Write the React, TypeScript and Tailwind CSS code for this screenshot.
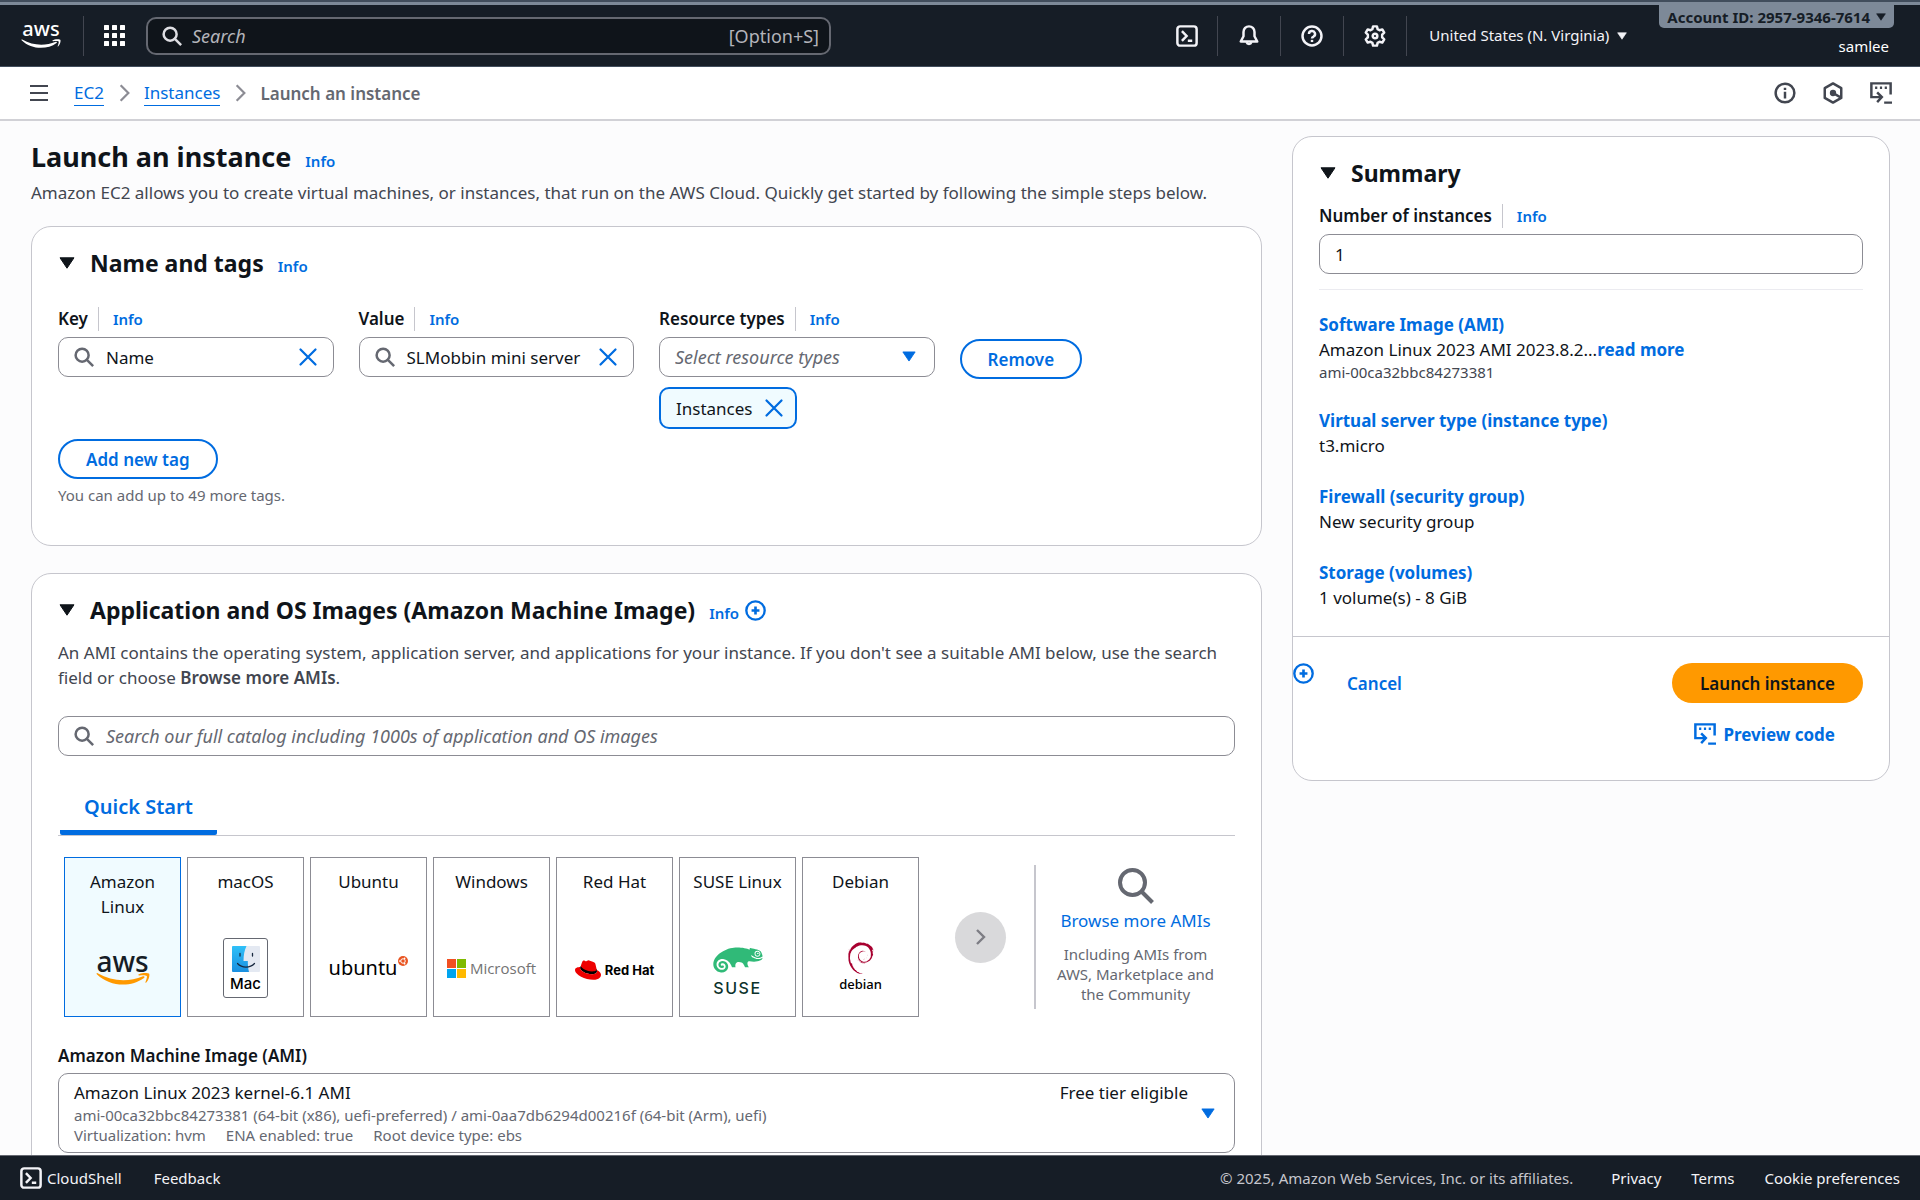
import React from 'react'
import { FaRedhat, FaSuse } from 'react-icons/fa'
import { SiDebian } from 'react-icons/si'

type IconProps = { className?: string }

const SearchIcon = ({ className = 'size-5' }: IconProps) => (
  <svg viewBox="0 0 16 16" className={`shrink-0 ${className}`} fill="none" stroke="currentColor" strokeWidth="2">
    <circle cx="6.5" cy="6.5" r="5.2" />
    <path d="m10.3 10.3 5 5" />
  </svg>
)

const CloseIcon = () => (
  <svg viewBox="0 0 16 16" className="size-5 shrink-0 text-[#006ce0]" fill="none" stroke="currentColor" strokeWidth="1.8" strokeLinecap="round">
    <path d="m2 2 12 12M14 2 2 14" />
  </svg>
)

const Caret = ({ className = '' }: IconProps) => (
  <svg viewBox="0 0 16 12" className={`shrink-0 ${className}`} fill="currentColor" stroke="currentColor" strokeLinejoin="round">
    <path d="M1 .8h14L8 11.2z" />
  </svg>
)

const ShellIcon = () => (
  <svg viewBox="0 0 16 16" className="size-[22px] shrink-0" fill="none" stroke="currentColor" strokeWidth="1.8">
    <rect x="1" y="1" width="14" height="14" rx="2" />
    <path d="m4.3 4.5 3.4 3.5-3.4 3.5M8.6 11.5h3.2" />
  </svg>
)

const BellIcon = () => (
  <svg viewBox="0 0 16 16" className="size-[22px]" fill="none" stroke="currentColor" strokeWidth="1.8" strokeLinejoin="round">
    <path d="M8 1a4 4 0 0 0-4 4v3.2L2 12h12l-2-3.8V5a4 4 0 0 0-4-4z" />
    <path d="M6.2 12.5a1.9 1.9 0 0 0 3.6 0" />
  </svg>
)

const HelpIcon = () => (
  <svg viewBox="0 0 16 16" className="size-[22px]" fill="none" stroke="currentColor" strokeWidth="1.8">
    <circle cx="8" cy="8" r="6.9" />
    <path d="M5.8 6.5a2.2 2.2 0 1 1 3.3 1.9c-.8.4-1.1.7-1.1 1.4" />
    <path d="M8 10.8v1.6" />
  </svg>
)

const GearIcon = () => (
  <svg viewBox="0 0 16 16" className="size-[22px]" fill="none" stroke="currentColor" strokeWidth="1.8" strokeLinejoin="round">
    <path d="M6.6 1h2.8l.5 2 1.4.8 2-.6 1.4 2.4L13.2 7v2l1.5 1.4-1.4 2.4-2-.6-1.4.8-.5 2H6.6l-.5-2-1.4-.8-2 .6-1.4-2.4L2.8 9V7L1.3 5.6l1.4-2.4 2 .6L6.1 3z" />
    <circle cx="8" cy="8" r="1.7" />
  </svg>
)

const InfoIcon = () => (
  <svg viewBox="0 0 16 16" className="size-[22px]" fill="none" stroke="currentColor" strokeWidth="1.8">
    <circle cx="8" cy="8" r="6.8" />
    <path d="M8 7v5M8 4.2v1.7" />
  </svg>
)

const HexIcon = () => (
  <svg viewBox="0 0 16 16" className="size-[22px]" fill="none" stroke="currentColor" strokeWidth="1.8" strokeLinejoin="round">
    <path d="M8 1 14 4.4v7.2L8 15l-6-3.4V4.4z" />
    <path d="m8 8 5.5 3.2" />
    <circle cx="8" cy="8" r="1.4" fill="currentColor" />
  </svg>
)

const PreviewIcon = () => (
  <svg viewBox="0 0 16 16" className="size-[22px] shrink-0" fill="none" stroke="currentColor" strokeWidth="1.8">
    <path d="M15 9V1H1v10h6.5M5.2 7.6 8.6 11l-3.4 3.6M10.3 15H16" />
    <path d="M3.7 4.2h1.6M7.2 4.2h1.6M10.7 4.2h1.6" />
  </svg>
)

const PlusCircle = () => (
  <svg viewBox="0 0 16 16" className="size-[21px]" fill="none" stroke="currentColor" strokeWidth="1.8">
    <circle cx="8" cy="8" r="7" />
    <path d="M8 5v6M5 8h6" strokeWidth="2" />
  </svg>
)

const Smile = ({ className = '' }: IconProps) => (
  <svg viewBox="0 0 54 14" className={className} fill="currentColor">
    <path d="M.8 1.2C.2.4.8-.2 1.6.3 16 8.5 32 9.5 47 3.3c1.2-.5 2.2.8 1 1.6C35 14.5 14 14 .8 1.2z" />
    <path d="M42.5 1.6C45-.2 50-.5 53 .5c1 .8.2 6.5-2.7 9-.6.5-1.1.2-.8-.5.7-1.9 1.8-4.8 1.3-5.9-.7-1-4.5-.9-7.3-.6-1 .1-1.6-.4-1-.9z" />
  </svg>
)

const InfoLink = () => (
  <a href="#" className="text-[15px] leading-5 font-semibold text-[#006ce0]">
    Info
  </a>
)

const CardHeading = ({ title, children }: { title: string; children?: React.ReactNode }) => (
  <div className="flex items-center gap-[15px]">
    <Caret className="ml-px w-4 h-3" />
    <div className="flex items-baseline gap-[14px]">
      <h2 className="text-[23px] leading-8 font-bold">{title}</h2>
      {children}
    </div>
  </div>
)

const FieldLabel = ({ id, text }: { id: string; text: string }) => (
  <div className="flex items-center mb-[6px] leading-[25px]">
    <label htmlFor={id} className="font-semibold">
      {text}
    </label>
    <span className="ml-[10px] mr-[14px] h-6 w-px bg-[#c6c6cd]" />
    <InfoLink />
  </div>
)

const SearchField = ({ id, value }: { id: string; value: string }) => (
  <div className="flex items-center h-10 gap-3 px-[15px] border border-[#8c8c94] rounded-[10px] bg-white">
    <SearchIcon className="size-5 text-[#656871]" />
    <input id={id} defaultValue={value} className="flex-1 min-w-0 outline-none" />
    <button aria-label="Clear">
      <CloseIcon />
    </button>
  </div>
)

const AwsLogo = () => (
  <div className="flex flex-col items-center">
    <span className="text-[28px] leading-6 font-medium text-[#161d26]">aws</span>
    <Smile className="w-[54px] h-[14px] text-[#ff9900]" />
  </div>
)

const MacLogo = () => (
  <div className="flex flex-col items-center w-[45px] h-[60px] pt-[7px] border border-[#656871] rounded-[3px] bg-white">
    <svg viewBox="0 0 28 26" className="w-7 h-[26px]">
      <defs>
        <linearGradient id="finder" x1="0" y1="0" x2="0" y2="1">
          <stop offset="0" stopColor="#2fc0f8" />
          <stop offset="1" stopColor="#1a8fe0" />
        </linearGradient>
      </defs>
      <rect width="28" height="26" rx="1" fill="#e4e9f2" />
      <path d="M0 1a1 1 0 0 1 1-1h13.5C12.5 4 11.5 9 11.5 15h4.3c0 4 .4 8 1.2 11H1a1 1 0 0 1-1-1z" fill="url(#finder)" />
      <path d="M8 7.5v2.5M20.5 7.5v2.5" stroke="#17283f" strokeWidth="1.3" strokeLinecap="round" />
      <path d="M5.5 17.5c4.5 4.8 12.5 4.8 17 0" stroke="#17283f" strokeWidth="1.2" fill="none" strokeLinecap="round" />
    </svg>
    <span className="font-[Inter] text-[15px] leading-6 font-medium text-black">Mac</span>
  </div>
)

const UbuntuLogo = () => (
  <div className="flex items-start gap-px">
    <span className="text-xl leading-7 text-black">ubuntu</span>
    <svg viewBox="0 0 20 20" className="size-[10px] mt-[2px]">
      <circle cx="10" cy="10" r="10" fill="#e95420" />
      <circle cx="10" cy="10" r="4.5" fill="none" stroke="#fff" strokeWidth="2" />
      <circle cx="3.8" cy="10" r="1.7" fill="#fff" />
      <circle cx="13.2" cy="4.6" r="1.7" fill="#fff" />
      <circle cx="13.2" cy="15.4" r="1.7" fill="#fff" />
    </svg>
  </div>
)

const MicrosoftLogo = () => (
  <div className="flex items-center gap-1">
    <svg viewBox="0 0 19 19" className="size-[19px]">
      <path d="M0 0h9v9H0z" fill="#f25022" />
      <path d="M10 0h9v9h-9z" fill="#7fba00" />
      <path d="M0 10h9v9H0z" fill="#00a4ef" />
      <path d="M10 10h9v9h-9z" fill="#ffb900" />
    </svg>
    <span className="font-['Open_Sans'] text-[15px] leading-5 font-medium text-[#737373]">Microsoft</span>
  </div>
)

const RedHatLogo = () => (
  <div className="flex items-center gap-1 pt-1">
    <span className="relative">
      {/* black hat band, seen through the gap of the icon */}
      <svg viewBox="0 0 512 512" className="absolute inset-0 size-[26px]">
        <path d="M104 199a49 49 0 0 0-4 19c0 49 110 123 236 122 56 0 98-21 98-58 0-3 0-5-5-27l-5-17L113 179z" />
      </svg>
      <FaRedhat className="relative size-[26px] text-[#ee0000]" />
    </span>
    <span className="font-[Inter] text-[13px] leading-5 font-bold text-black">Red Hat</span>
  </div>
)

const SuseLogo = () => (
  <div className="flex flex-col items-center">
    <FaSuse className="h-10 w-[50px] text-[#30ba78]" />
    <span className="font-[Inter] text-base leading-4 font-medium tracking-widest text-[#0c322c]">SUSE</span>
  </div>
)

const DebianLogo = () => (
  <div className="flex flex-col items-center">
    <SiDebian className="size-8 text-[#a80030]" />
    <span className="text-[13px] leading-5 font-medium text-black">debian</span>
  </div>
)

const systems = [
  { name: 'Amazon Linux', logo: <AwsLogo /> },
  { name: 'macOS', logo: <MacLogo /> },
  { name: 'Ubuntu', logo: <UbuntuLogo /> },
  { name: 'Windows', logo: <MicrosoftLogo /> },
  { name: 'Red Hat', logo: <RedHatLogo /> },
  { name: 'SUSE Linux', logo: <SuseLogo /> },
  { name: 'Debian', logo: <DebianLogo /> },
]

const Header = () => (
  <header className="bg-[#161d26] text-white">
    <div className="h-[5px] border-t-2 border-[#414d5c] bg-[#7d8998]" />
    <div className="flex items-center h-[62px] border-b border-[#414d5c]">
      <a href="#" aria-label="AWS home" className="flex flex-col items-center w-10 ml-[21px]">
        <span className="text-xl leading-4 font-medium">aws</span>
        <Smile className="w-10 h-[11px] mt-[2px]" />
      </a>
      <span className="h-10 w-px ml-[22px] bg-[#424650]" />
      <button aria-label="Services" className="ml-5">
        <svg viewBox="0 0 21 21" className="size-[21px]" fill="currentColor">
          {[0, 8, 16].map((y) =>
            [0, 8, 16].map((x) => <rect key={`${x}-${y}`} x={x} y={y} width="5" height="5" rx=".5" />)
          )}
        </svg>
      </button>
      <div className="flex items-center w-[685px] h-[38px] ml-[21px] px-[14px] gap-[10px] border-2 border-[#656871] rounded-[10px] bg-[#0f141a]">
        <SearchIcon className="size-5 text-[#dedee3]" />
        <input aria-label="Search" placeholder="Search" className="flex-1 min-w-0 text-lg outline-none placeholder:italic placeholder:text-[#b4b4bb]" />
        <span className="-mr-1 text-lg text-[#b4b4bb]">[Option+S]</span>
      </div>
      <nav className="flex items-center h-10 ml-auto text-[#f3f3f7]">
        <button aria-label="CloudShell" className="flex items-center justify-center w-[62px] h-10 border-r border-[#424650]">
          <ShellIcon />
        </button>
        <button aria-label="Notifications" className="flex items-center justify-center w-[63px] h-10 border-r border-[#424650]">
          <BellIcon />
        </button>
        <button aria-label="Help" className="flex items-center justify-center w-[63px] h-10 border-r border-[#424650]">
          <HelpIcon />
        </button>
        <button aria-label="Settings" className="flex items-center justify-center w-[63px] h-10 border-r border-[#424650]">
          <GearIcon />
        </button>
        <button className="flex items-center gap-2 ml-[22px] text-[15px]">
          United States (N. Virginia)
          <Caret className="w-[10px] h-2" />
        </button>
      </nav>
      <div className="flex flex-col items-end self-start ml-8 mr-[26px]">
        <button className="flex items-center gap-[6px] h-[23px] px-2 rounded-b-[5px] bg-[#7d8998] text-[15px] leading-6 font-bold text-[#161d26]">
          Account ID: 2957-9346-7614
          <Caret className="w-[10px] h-2" />
        </button>
        <span className="mt-[7px] mr-[5px] text-[15px] leading-[22px]">samlee</span>
      </div>
    </div>
  </header>
)

const Separator = () => (
  <svg viewBox="0 0 10 16" className="w-[11px] h-[18px] ml-[15px] mr-[14px]" fill="none" stroke="#8c8c94" strokeWidth="2">
    <path d="m1.5 1 7 7-7 7" />
  </svg>
)

const Breadcrumbs = () => (
  <div className="flex items-center h-[54px] pl-[30px] pr-7 border-b-2 border-[#d1d1d6] bg-white text-[#424650]">
    <button aria-label="Open menu" className="flex flex-col gap-[5px] w-[18px] mr-[26px]">
      <span className="w-full h-[2px] bg-[#424650]" />
      <span className="w-full h-[2px] bg-[#424650]" />
      <span className="w-full h-[2px] bg-[#424650]" />
    </button>
    <a href="#" className="leading-6 border-b border-[#006ce0] text-[#006ce0]">EC2</a>
    <Separator />
    <a href="#" className="leading-6 border-b border-[#006ce0] text-[#006ce0]">Instances</a>
    <Separator />
    <span className="font-semibold text-[#656871]">Launch an instance</span>
    <div className="flex gap-[26px] ml-auto">
      <button aria-label="Info"><InfoIcon /></button>
      <button aria-label="Amazon Q"><HexIcon /></button>
      <button aria-label="Preview code"><PreviewIcon /></button>
    </div>
  </div>
)

const NameAndTags = () => (
  <section className="mt-[21px] px-[26px] pt-5 pb-10 border border-[#c6c6cd] rounded-[20px] bg-white">
    <CardHeading title="Name and tags">
      <InfoLink />
    </CardHeading>
    <div className="grid grid-cols-4 gap-x-[25px] mt-[27px]">
      <div>
        <FieldLabel id="tag-key" text="Key" />
        <SearchField id="tag-key" value="Name" />
      </div>
      <div>
        <FieldLabel id="tag-value" text="Value" />
        <SearchField id="tag-value" value="SLMobbin mini server" />
      </div>
      <div>
        <FieldLabel id="tag-types" text="Resource types" />
        <div className="relative">
          <select id="tag-types" className="w-full h-10 px-[15px] border border-[#8c8c94] rounded-[10px] bg-white appearance-none text-lg italic text-[#656871]">
            <option>Select resource types</option>
          </select>
          <Caret className="absolute right-[19px] top-[14px] w-[14px] h-[11px] text-[#006ce0] pointer-events-none" />
        </div>
        <span className="inline-flex items-center h-[42px] gap-3 mt-[10px] px-[15px] border-2 border-[#006ce0] rounded-[10px] bg-[#f0fbff]">
          Instances
          <button aria-label="Remove Instances" className="-mr-1">
            <CloseIcon />
          </button>
        </span>
      </div>
      <div className="pt-[33px]">
        <button className="h-10 px-[26px] border-2 border-[#006ce0] rounded-full font-semibold text-[#006ce0]">Remove</button>
      </div>
    </div>
    <button className="h-10 mt-[10px] px-[26px] border-2 border-[#006ce0] rounded-full font-semibold text-[#006ce0]">Add new tag</button>
    <p className="mt-[6px] text-[15px] leading-5 text-[#656871]">You can add up to 49 more tags.</p>
  </section>
)

const Images = () => (
  <section className="mt-[27px] px-[26px] pt-5 pb-10 border border-[#c6c6cd] rounded-[20px] bg-white">
    <div className="flex items-center gap-[6px]">
      <CardHeading title="Application and OS Images (Amazon Machine Image)">
        <InfoLink />
      </CardHeading>
      <button aria-label="Add" className="text-[#006ce0]">
        <PlusCircle />
      </button>
    </div>
    <p className="mt-[14px] text-[#424650]">
      An AMI contains the operating system, application server, and applications for your instance. If you don't see a suitable AMI below, use the search field or choose <b className="font-semibold">Browse more AMIs</b>.
    </p>
    <div className="flex items-center h-10 gap-3 mt-[26px] px-[15px] border border-[#8c8c94] rounded-[10px]">
      <SearchIcon className="size-5 text-[#656871]" />
      <input
        aria-label="Search images"
        placeholder="Search our full catalog including 1000s of application and OS images"
        className="flex-1 text-lg outline-none placeholder:italic placeholder:text-[#656871]"
      />
    </div>
    <div className="mt-[38px] border-b border-[#c6c6cd]" role="tablist">
      <button role="tab" className="ml-[2px] px-6 pb-[10px] border-b-[5px] border-[#006ce0] rounded-b-[2px] text-xl leading-[26px] font-semibold text-[#006ce0]">
        Quick Start
      </button>
    </div>
    <div className="flex mt-[21px] pl-[6px]">
      <div className="flex gap-[6px]">
        {systems.map((system, i) => (
          <label
            key={system.name}
            className="relative flex flex-col items-center w-[117px] h-40 px-2 pt-[11px] border border-[#8c8c94] text-center has-checked:border-[#006ce0] has-checked:bg-[#f0fbff]"
          >
            <input type="radio" name="system" defaultChecked={i === 0} className="sr-only" />
            <span className="h-[50px]">{system.name}</span>
            <span className="flex items-center justify-center h-[76px] mt-[11px]">{system.logo}</span>
          </label>
        ))}
      </div>
      <div className="flex items-center justify-center flex-1">
        <button aria-label="Next" className="flex items-center justify-center size-[51px] ml-2 rounded-full bg-[#d9d9db]">
          <svg viewBox="0 0 10 16" className="w-[10px] h-4" fill="none" stroke="#7d7d84" strokeWidth="2.4">
            <path d="m1 1 7 7-7 7" />
          </svg>
        </button>
      </div>
      <div className="flex flex-col items-center w-[201px] h-36 mt-2 border-l-2 border-[#c6c6cd] text-center">
        <svg viewBox="0 0 36 36" className="size-9 mt-[3px]" fill="none" stroke="#656871" strokeWidth="4">
          <circle cx="14.5" cy="14.5" r="12.5" />
          <path d="m23.5 23.5 11 11" />
        </svg>
        <a href="#" className="mt-1 text-[#006ce0]">Browse more AMIs</a>
        <p className="w-[176px] mt-[11px] text-[15px] leading-5 text-[#656871]">Including AMIs from AWS, Marketplace and the Community</p>
      </div>
    </div>
    <p className="mt-[26px] font-semibold" id="ami-label">Amazon Machine Image (AMI)</p>
    <button aria-labelledby="ami-label" className="flex w-full h-20 mt-[5px] pl-[15px] pr-[19px] pt-[6px] border border-[#8c8c94] rounded-[10px] text-left">
      <span className="flex-1">
        <span className="block">Amazon Linux 2023 kernel-6.1 AMI</span>
        <span className="block text-[15px] leading-5 text-[#656871]">
          ami-00ca32bbc84273381 (64-bit (x86), uefi-preferred) / ami-0aa7db6294d00216f (64-bit (Arm), uefi)
        </span>
        <span className="flex gap-5 text-[15px] leading-5 text-[#656871]">
          <span>Virtualization: hvm</span>
          <span>ENA enabled: true</span>
          <span>Root device type: ebs</span>
        </span>
      </span>
      <span>Free tier eligible</span>
      <Caret className="w-[14px] h-[11px] ml-[13px] mt-7 text-[#006ce0]" />
    </button>
  </section>
)

const SummaryItem = ({ title, children }: { title: string; children: React.ReactNode }) => (
  <div>
    <a href="#" className="block font-bold text-[#006ce0]">{title}</a>
    {children}
  </div>
)

const Summary = () => (
  <aside className="w-[598px] shrink-0 mt-[15px] border border-[#c6c6cd] rounded-[20px] bg-white">
    <div className="px-[26px] pt-5 pb-[26px]">
      <CardHeading title="Summary" />
      <div className="mt-[14px]">
        <FieldLabel id="count" text="Number of instances" />
        <input id="count" defaultValue="1" className="w-full h-10 px-[15px] border border-[#8c8c94] rounded-[10px]" />
      </div>
      <hr className="mt-[15px] mb-[22px] border-[#ebebf0]" />
      <div className="flex flex-col gap-[26px]">
        <SummaryItem title="Software Image (AMI)">
          <p>
            Amazon Linux 2023 AMI 2023.8.2...<a href="#" className="font-bold text-[#006ce0]">read more</a>
          </p>
          <p className="text-[15px] leading-5 text-[#424650]">ami-00ca32bbc84273381</p>
        </SummaryItem>
        <SummaryItem title="Virtual server type (instance type)">
          <p>t3.micro</p>
        </SummaryItem>
        <SummaryItem title="Firewall (security group)">
          <p>New security group</p>
        </SummaryItem>
        <SummaryItem title="Storage (volumes)">
          <p>1 volume(s) - 8 GiB</p>
        </SummaryItem>
      </div>
    </div>
    <div className="flex items-start pt-[26px] pb-[26px] pr-[26px] border-t border-[#c6c6cd]">
      <button aria-label="Add" className="text-[#006ce0]">
        <PlusCircle />
      </button>
      <button className="h-10 ml-[33px] font-semibold text-[#006ce0]">Cancel</button>
      <div className="flex flex-col items-end gap-[11px] ml-auto">
        <button className="h-10 px-7 rounded-full bg-[#ff9900] font-semibold text-[#0f141a]">Launch instance</button>
        <button className="flex items-center h-10 gap-2 px-7 font-bold text-[#006ce0]">
          <PreviewIcon />
          Preview code
        </button>
      </div>
    </div>
  </aside>
)

const Footer = () => (
  <footer className="flex items-center h-[45px] shrink-0 px-5 bg-[#161d26] border-t border-[#656871] text-[15px] text-[#f3f3f7]">
    <button className="flex items-center gap-[5px]">
      <ShellIcon />
      CloudShell
    </button>
    <a href="#" className="ml-8">Feedback</a>
    <p className="ml-auto text-[#c6c6cd]">© 2025, Amazon Web Services, Inc. or its affiliates.</p>
    <a href="#" className="ml-[38px]">Privacy</a>
    <a href="#" className="ml-[30px]">Terms</a>
    <a href="#" className="ml-[30px]">Cookie preferences</a>
  </footer>
)

const App = () => {
  return (
    <div className="flex flex-col h-screen bg-[#fcfcfd] font-['Noto_Sans',sans-serif] text-[17px] leading-[25px] text-[#0f141a]">
      <Header />
      <Breadcrumbs />
      <main className="flex items-start flex-1 min-h-0 gap-[30px] pl-[31px] pr-[30px] overflow-hidden">
        <div className="flex-1 min-w-0 pt-[17px]">
          <div className="flex items-baseline gap-[14px]">
            <h1 className="text-[27px] leading-[38px] font-bold">Launch an instance</h1>
            <InfoLink />
          </div>
          <p className="mt-1 text-[#424650]">
            Amazon EC2 allows you to create virtual machines, or instances, that run on the AWS Cloud. Quickly get started by following the simple steps below.
          </p>
          <NameAndTags />
          <Images />
        </div>
        <Summary />
      </main>
      <Footer />
    </div>
  )
}

export default App
